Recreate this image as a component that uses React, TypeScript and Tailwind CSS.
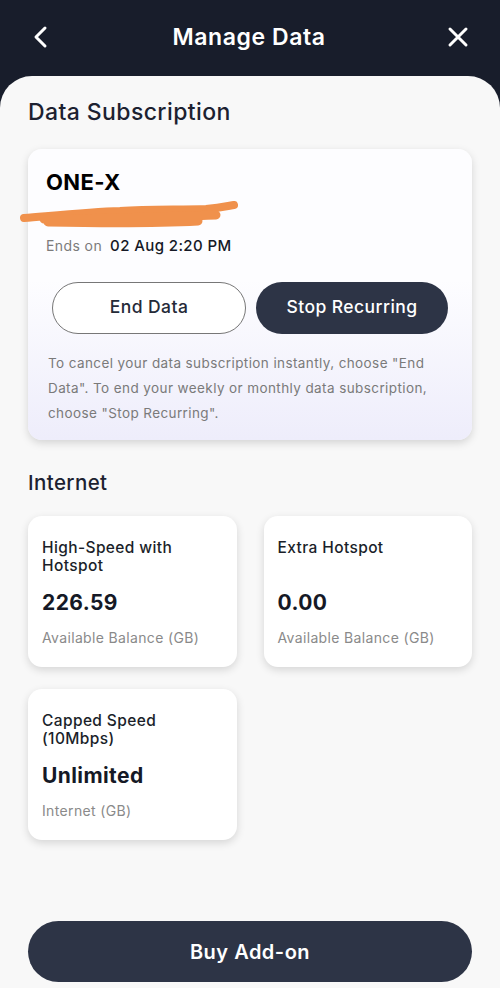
const font = { fontFamily: "Inter, 'Noto Sans', sans-serif" };

function BalanceCard({
  title,
  value,
  label,
}: {
  title: string;
  value: string;
  label: string;
}) {
  return (
    <div className="flex h-[151px] flex-col rounded-[14px] bg-white pl-[14px] pr-[26px] pt-[23px] shadow-[0_3px_8px_rgba(0,0,0,0.14)]">
      <div className="h-[38px] text-[15.5px] font-medium leading-[18px] tracking-[0.025em] text-[#1b1f2a]">
        {title}
      </div>
      <div className="mt-[13px] text-[21px] font-bold leading-[26px] text-[#151926]">
        {value}
      </div>
      <div className="mt-[13px] text-[14px] leading-[18px] tracking-[0.025em] text-[#8a8a8a]">
        {label}
      </div>
    </div>
  );
}

export default function App() {
  return (
    <div className="flex h-[988px] w-[500px] flex-col overflow-hidden bg-[#181d2b]" style={font}>
      <header className="flex h-[76px] shrink-0 items-center justify-between px-[30px] pb-[2px]">
        <svg width="22" height="24" viewBox="0 0 22 24" fill="none">
          <path d="M15 3 L6 12 L15 21" stroke="white" strokeWidth="3" strokeLinecap="round" strokeLinejoin="round" />
        </svg>
        <h1 className="text-[23px] font-semibold tracking-[0.025em] text-white">Manage Data</h1>
        <svg width="24" height="24" viewBox="0 0 24 24" fill="none">
          <path d="M4 4 L20 20 M20 4 L4 20" stroke="white" strokeWidth="3" strokeLinecap="round" />
        </svg>
      </header>

      <main className="flex flex-1 flex-col rounded-t-[32px] bg-[#f8f8f8] px-[28px] pt-[22px] tracking-[0.025em]">
        <h2 className="text-[23px] font-medium leading-[28px] text-[#1c2130]">Data Subscription</h2>

        <section className="mt-[23px] rounded-[14px] bg-gradient-to-b from-[#fdfdff] from-45% to-[#eeedfb] px-[18px] pb-[14px] pt-[20px] shadow-[0_3px_9px_rgba(0,0,0,0.15)]">
          <div className="text-[22px] font-bold leading-[26px] text-black">ONE-X</div>
          <div className="relative h-[31px]">
            <svg className="absolute left-[-26px] top-[5px]" width="222" height="30" viewBox="0 0 222 30" fill="none">
              <path
                d="M4 18 C 40 15, 70 12, 100 11 C 130 9, 160 10, 186 9 C 200 8, 208 6, 214 5"
                stroke="#f0914c"
                strokeWidth="8"
                strokeLinecap="round"
              />
              <path
                d="M24 19 C 70 19, 130 17, 196 15 M28 22 C 80 23, 140 23, 178 21"
                stroke="#f0914c"
                strokeWidth="9"
                strokeLinecap="round"
              />
            </svg>
          </div>
          <div className="mt-[9px] flex items-baseline gap-[8px]">
            <span className="text-[14px] text-[#7b7b7b]">Ends on</span>
            <span className="text-[15px] font-medium text-[#151926]">02 Aug 2:20 PM</span>
          </div>
          <div className="mt-[24px] flex gap-[10px] px-[6px]">
            <button className="h-[52px] flex-1 rounded-full border-[1.5px] border-[#777] bg-white text-[17.5px] font-medium tracking-[0.025em] text-[#252a38]">
              End Data
            </button>
            <button className="h-[52px] flex-1 rounded-full bg-[#2d3446] text-[17.5px] font-medium tracking-[0.025em] text-white">
              Stop Recurring
            </button>
          </div>
          <p className="mt-[17px] px-[2px] text-[13.5px] leading-[25px] text-[#7a7a7a]">
            To cancel your data subscription instantly, choose "End Data". To end your weekly or monthly data subscription, choose "Stop Recurring".
          </p>
        </section>

        <h3 className="mt-[30px] text-[20.5px] font-medium leading-[26px] text-[#1c2130]">Internet</h3>

        <div className="mt-[20px] grid grid-cols-2 gap-x-[27px] gap-y-[22px]">
          <BalanceCard title="High-Speed with Hotspot" value="226.59" label="Available Balance (GB)" />
          <BalanceCard title="Extra Hotspot" value="0.00" label="Available Balance (GB)" />
          <BalanceCard title="Capped Speed (10Mbps)" value="Unlimited" label="Internet (GB)" />
        </div>

        <div className="flex-1" />
        <button className="mb-[6px] h-[61px] w-full rounded-full bg-[#2d3446] text-[20px] font-semibold tracking-[0.025em] text-white">
          Buy Add-on
        </button>
      </main>
    </div>
  );
}
